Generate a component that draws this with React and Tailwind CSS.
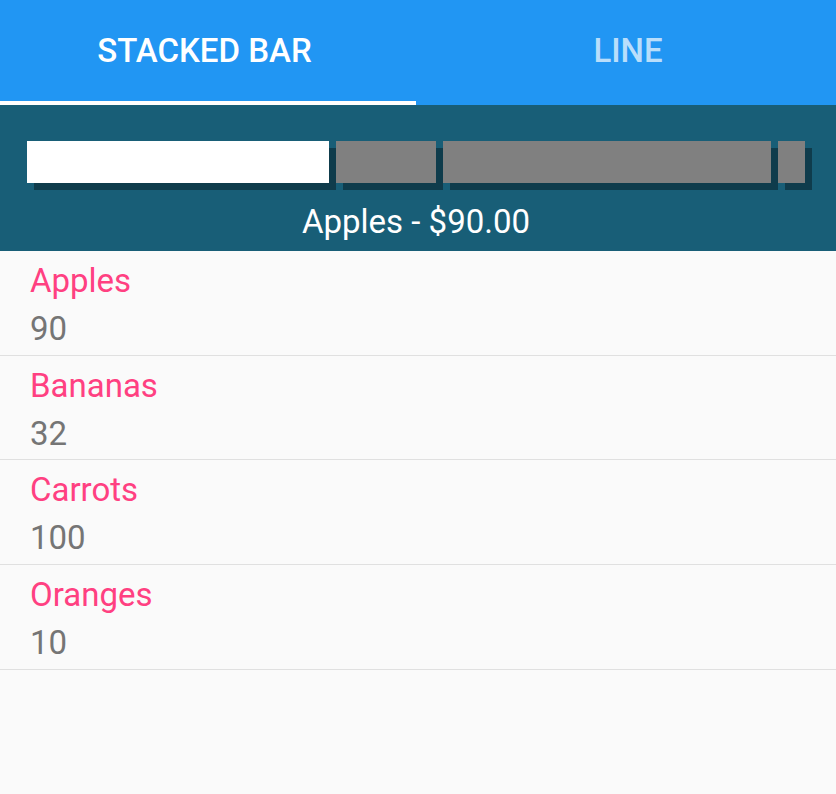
import React, { useState } from "react";

const items = [
  { name: "Apples", value: 90 },
  { name: "Bananas", value: 32 },
  { name: "Carrots", value: 100 },
  { name: "Oranges", value: 10 },
];

// segment widths as measured on the bar
const widths = ["w-[302px]", "w-[100px]", "w-[328px]", "w-[27px]"];

const App = () => {
  const [tab, setTab] = useState("bar");
  const [selected, setSelected] = useState(0);

  return (
    <div className="w-[836px] h-[794px] bg-[#fafafa] font-['Roboto',sans-serif]">
      {/* Tabs */}
      <div className="flex bg-[#2196f3] h-[105px]">
        {[
          { id: "bar", label: "STACKED BAR", pad: "pr-[9px]" },
          { id: "line", label: "LINE", pad: "pl-[2px]" },
        ].map((t) => (
          <button
            key={t.id}
            onClick={() => setTab(t.id)}
            className={`flex-1 flex flex-col ${tab === t.id ? "text-white" : "text-white/70"}`}
          >
            <span className={`h-[101px] w-full flex items-center justify-center text-[33px] font-medium ${t.pad}`}>
              {t.label}
            </span>
            <span className={`h-[4px] w-[416px] ${tab === t.id ? "bg-white" : "bg-transparent"}`} />
          </button>
        ))}
      </div>

      {/* Chart */}
      <div className="bg-[#185e77] h-[146px] pt-[36px] pl-[27px]">
        <div className="flex gap-[7px] h-[42px]">
          {items.map((item, i) => (
            <div
              key={item.name}
              onClick={() => setSelected(i)}
              className={`${widths[i]} h-full shadow-[7px_7px_0_#0f3c4c] ${selected === i ? "bg-white" : "bg-[#808080]"}`}
            />
          ))}
        </div>
        <div className="pr-[31px] text-center text-white text-[33px] leading-[48px] mt-[15px]">
          {items[selected].name} - ${items[selected].value.toFixed(2)}
        </div>
      </div>

      {/* List */}
      <div>
        {items.map((item) => (
          <div key={item.name} className="h-[104.7px] pt-[6px] pl-[30px] border-b border-[#e0e0e0]">
            <div className="text-[33px] leading-[48px] text-[#ff4081]">{item.name}</div>
            <div className="text-[33px] leading-[48px] text-[#757575]">{item.value}</div>
          </div>
        ))}
      </div>
    </div>
  );
};

export default App;
